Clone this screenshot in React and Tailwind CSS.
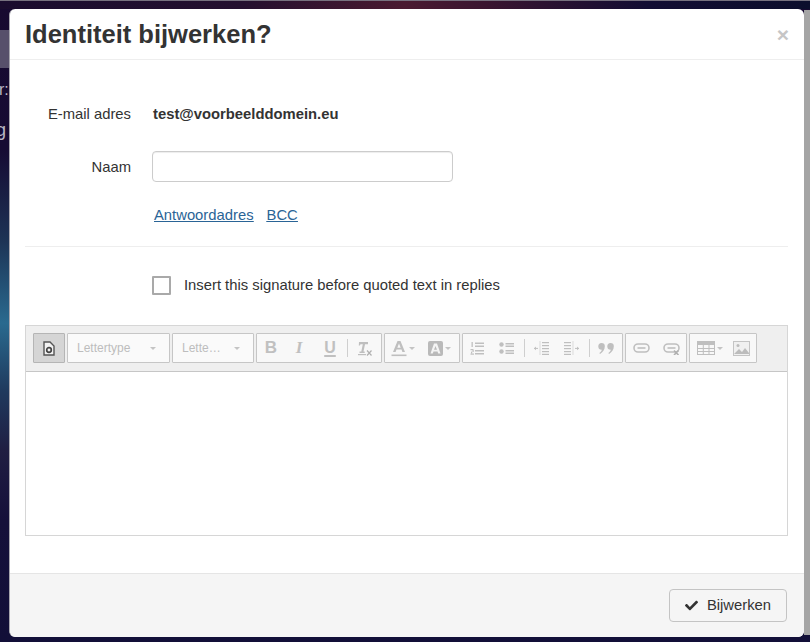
import React from 'react';
import { FaCheck } from 'react-icons/fa';

const ICON = '#bfbfbf';

function Btn({ w = 28, className = '', children }) {
    return (
        <span className={`flex h-full shrink-0 items-center justify-center ${className}`} style={{ width: w }}>
            {children}
        </span>
    );
}

function Group({ w, children }) {
    return (
        <div className="flex h-[30px] shrink-0 items-center rounded-[1px] border border-[#c6c6c6] bg-[#f8f8f8]" style={{ width: w }}>
            {children}
        </div>
    );
}

function Combo({ w, label, labelW }) {
    return (
        <div className="flex h-[30px] shrink-0 items-center rounded-[1px] border border-[#c6c6c6] bg-[#fafafa] pl-[9px]" style={{ width: w }}>
            <span className="text-[12px] text-[#bdbdbd]" style={{ width: labelW }}>{label}</span>
            <Caret />
        </div>
    );
}

function Caret() {
    return <span className="h-0 w-0 border-x-[3px] border-t-[3px] border-x-transparent border-t-[#c4c4c4]" />;
}

function Sep() {
    return <span className="h-[18px] w-px shrink-0 bg-[#cfcfcf]" />;
}

function Lines({ kind }) {
    if (kind === 'num') {
        return (
            <svg width="14" height="14" viewBox="0 0 14 14" fill={ICON}>
                <rect x="5" y="1.5" width="9" height="1.5" />
                <rect x="5" y="4.5" width="9" height="1.5" />
                <rect x="5" y="9" width="9" height="1.5" />
                <rect x="5" y="12" width="9" height="1.5" />
                <rect x="1.5" y="1" width="1.3" height="5" />
                <rect x="0.5" y="8" width="3" height="1.2" />
                <rect x="0.5" y="12.5" width="3.5" height="1.2" />
                <rect x="2.5" y="9" width="1.2" height="2" />
                <rect x="1" y="10.6" width="1.2" height="2" />
            </svg>
        );
    }
    return (
        <svg width="15" height="14" viewBox="0 0 15 14" fill={ICON}>
            <circle cx="2.5" cy="3.5" r="2.2" />
            <circle cx="2.5" cy="10.5" r="2.2" />
            <rect x="6.5" y="2" width="8.5" height="1.5" />
            <rect x="6.5" y="4.5" width="8.5" height="1.5" />
            <rect x="6.5" y="9" width="8.5" height="1.5" />
            <rect x="6.5" y="11.5" width="8.5" height="1.5" />
        </svg>
    );
}

function Indent({ flip }) {
    return (
        <svg width="15" height="14" viewBox="0 0 15 14" fill={ICON} className={flip ? '-scale-x-100' : ''}>
            <rect x="8" y="1" width="7" height="1.2" />
            <rect x="8" y="4" width="7" height="1.2" />
            <rect x="8" y="7" width="7" height="1.2" />
            <rect x="8" y="10" width="7" height="1.2" />
            <rect x="8" y="12.8" width="7" height="1.2" />
            <path d="M6 0.500v13" stroke={ICON} strokeDasharray="1 1" />
            <rect x="0" y="6.900" width="4" height="1" />
            <path d="M0 7.400 2 5.500v3.800z" />
        </svg>
    );
}

function LinkIcon({ broken }) {
    return (
        <svg width="17" height="14" viewBox="0 0 17 14" fill="none" stroke={ICON} strokeWidth="1.6">
            <rect x="1" y="3" width="15" height="8" rx="4" />
            <path d="M4.500 7h8" />
            {broken && <path d="M11 9.500 15.500 14M15.500 9.500 11 14" strokeWidth="1.600" stroke="#b0b0b0" />}
        </svg>
    );
}

function Toolbar() {
    return (
        <div className="flex h-[46px] items-center gap-[2px] border-b border-[#c6c6c6] bg-[#efefef] pl-[7px]">
            <div className="flex h-[30px] w-[32px] shrink-0 items-center justify-center rounded-[1px] border border-[#b5b5b5] bg-[#d5d5d5]">
                <svg width="14" height="15" viewBox="0 0 14 15" fill="none">
                    <path d="M2 1h6l4 4v9H2z" stroke="#555" strokeWidth="1.400" fill="#f2f2f2" />
                    <circle cx="7" cy="9" r="2.300" stroke="#444" strokeWidth="1.700" />
                </svg>
            </div>
            <Combo w={103} label="Lettertype" labelW={73} />
            <Combo w={82} label="Lette…" labelW={52} />
            <Group w={126}>
                <Btn><span className="text-[17px] font-bold text-[#c0c0c0]">B</span></Btn>
                <Btn><span className="font-['Liberation_Serif',serif] text-[17px] font-bold italic text-[#c0c0c0]">I</span></Btn>
                <Btn className="ml-[3px]"><span className="text-[16px] font-bold text-[#c0c0c0] underline decoration-[1.5px] underline-offset-2">U</span></Btn>
                <Btn w={3} />
                <Sep />
                <Btn className="ml-[3px]">
                    <svg width="16" height="16" viewBox="0 0 16 16" fill={ICON}>
                        <path d="M2 2h9v2.200H8L6.500 11.500h1.200V13H2.500v-1.500h1.800L5.800 4.200H3.400L3 5.500H1.800z" />
                        <rect x="1" y="14" width="8" height="1.200" />
                        <path d="M10 10.500l4.500 5M14.500 10.500l-4.500 5" stroke="#b0b0b0" strokeWidth="1.200" />
                    </svg>
                </Btn>
            </Group>
            <Group w={76}>
                <Btn w={31} className="gap-[2px] pl-[4px]">
                    <svg width="16" height="17" viewBox="0 0 16 17" fill={ICON}>
                        <path d="M6.500 1h3L14 12h-2.600l-.9-2.400h-5L4.600 12H2zM8 3.600 6.300 7.800h3.400z" />
                        <rect x="0.500" y="14.500" width="15" height="1.600" />
                    </svg>
                    <Caret />
                </Btn>
                <Btn w={6} />
                <Btn w={31} className="gap-[2px] pl-[4px]">
                    <svg width="15" height="15" viewBox="0 0 15 15">
                        <rect width="15" height="15" rx="2" fill="#bababa" />
                        <path d="M6 2.500h3L12.500 12.500h-2.300l-.7-2h-4l-.7 2H2.500zM7.500 5 6 8.700h3z" fill="#f4f4f4" />
                    </svg>
                    <Caret />
                </Btn>
            </Group>
            <Group w={161}>
                <Btn><Lines kind="num" /></Btn>
                <Btn w={30}><Lines kind="bul" /></Btn>
                <Btn w={3} />
                <Sep />
                <Btn w={32}><Indent /></Btn>
                <Btn w={28}><Indent flip /></Btn>
                <Btn w={4} />
                <Sep />
                <Btn w={31}>
                    <svg width="16" height="11" viewBox="0 0 16 11" fill={ICON}>
                        <path d="M3.500 0a3.300 3.300 0 0 1 3.300 3.500c0 3-2 6-4.800 7.500l-.6-1c1.300-1 2.200-2 2.500-3.200A3.300 3.300 0 0 1 3.500 0zM12.500 0a3.300 3.300 0 0 1 3.300 3.500c0 3-2 6-4.800 7.500l-.6-1c1.300-1 2.200-2 2.500-3.200a3.300 3.300 0 0 1-.4-6.800z" />
                    </svg>
                </Btn>
            </Group>
            <Group w={62}>
                <Btn w={30}><LinkIcon /></Btn>
                <Btn w={30}><LinkIcon broken /></Btn>
            </Group>
            <Group w={68}>
                <Btn w={36} className="gap-[2px] pl-[4px]">
                    <svg width="18" height="14" viewBox="0 0 18 14" fill="none" stroke={ICON}>
                        <rect x="0.500" y="0.500" width="17" height="13" />
                        <rect x="0.500" y="0.500" width="17" height="3" fill={ICON} />
                        <path d="M6.300 4v10M12 4v10M1 7.500h17M1 10.500h17" />
                    </svg>
                    <Caret />
                </Btn>
                <Btn w={30}>
                    <svg width="17" height="15" viewBox="0 0 17 15">
                        <rect x="0.500" y="0.500" width="16" height="14" fill="#f0f0f0" stroke="#c4c4c4" />
                        <path d="M1 13l5-5 3 3 3-4 4 5v1H1z" fill="#bcbcbc" />
                        <circle cx="5" cy="4.500" r="1.500" fill="#bcbcbc" />
                    </svg>
                </Btn>
            </Group>
        </div>
    );
}

export default function App() {
    return (
        <div className="relative flex h-[642px] w-[810px] overflow-hidden bg-[linear-gradient(180deg,#170a30_0px,#160b33_150px,#1d3355_240px,#2a6a8f_323px,#1f3a5e_390px,#201e42_450px,#15103a_520px,#120f38_642px)] pb-[5px] pl-[9px] pt-[9px] font-['Liberation_Sans',Arial,sans-serif] text-[14.8px] text-[#333]">
            <div className="absolute left-0 top-[30px] h-[38px] w-[10px] bg-[#57506b]" />
            <div className="absolute -left-[1px] top-[78px] text-[16px] text-[#b9b7c4]">r:</div>
            <div className="absolute -left-[4px] top-[117px] text-[18px] text-[#b9b7c4]">g</div>
            <div className="absolute inset-x-0 top-0 h-[9px] border-t border-[#77727f] bg-[linear-gradient(90deg,#1a0c2e_0%,#24102f_30%,#4a1a30_50%,#3a1530_60%,#120d33_80%,#0c0e2c_100%)]" />

            <div className="relative flex w-[795px] flex-col rounded-[6px] border-l border-[#a7a6ae] bg-white">
                <div className="flex h-[51px] items-center justify-between border-b border-[#eeeeee] px-[15px]">
                    <h1 className="text-[25.5px] font-bold text-[#333]">Identiteit bijwerken?</h1>
                    <span className="text-[21px] font-bold leading-none text-[#c6c6c6]">×</span>
                </div>

                <div className="flex flex-1 flex-col pl-[15px] pr-[16px]">
                    <div className="mt-[43px] flex items-center">
                        <span className="w-[106px] text-right">E-mail adres</span>
                        <span className="ml-[22px] font-bold">test@voorbeelddomein.eu</span>
                    </div>
                    <div className="mt-[26px] flex items-center">
                        <span className="w-[106px] text-right">Naam</span>
                        <input className="ml-[21px] h-[31px] w-[301px] rounded-[4px] border border-[#cccccc] bg-white shadow-[inset_0_1px_1px_rgba(0,0,0,0.075)]" />
                    </div>
                    <div className="ml-[129px] mt-[22px] flex gap-[13px] text-[#2a6496] underline">
                        <a href="#">Antwoordadres</a>
                        <a href="#">BCC</a>
                    </div>
                    <div className="mt-[20px] border-t border-[#eeeeee]" />
                    <div className="ml-[127px] mt-[27px] flex items-center gap-[13px]">
                        <span className="h-[19px] w-[19px] rounded-[1px] border-2 border-[#a9a9a9] bg-white" />
                        <span>Insert this signature before quoted text in replies</span>
                    </div>
                    <div className="mt-[28px] flex h-[211px] flex-col border border-[#d6d6d6]">
                        <Toolbar />
                    </div>
                </div>

                <div className="flex h-[64px] items-center justify-end rounded-b-[6px] border-t border-[#e5e5e5] bg-[#f5f5f5] pr-[17px]">
                    <button className="flex h-[33px] w-[118px] items-center justify-center gap-[9px] rounded-[4px] border border-[#c4c4c4] bg-[#f5f5f5]">
                        <FaCheck className="text-[13px] text-[#333]" />
                        Bijwerken
                    </button>
                </div>
            </div>
            <div className="mb-[2px] mt-[1px] w-[6px] bg-[#a5a5a5]" />
        </div>
    );
}
